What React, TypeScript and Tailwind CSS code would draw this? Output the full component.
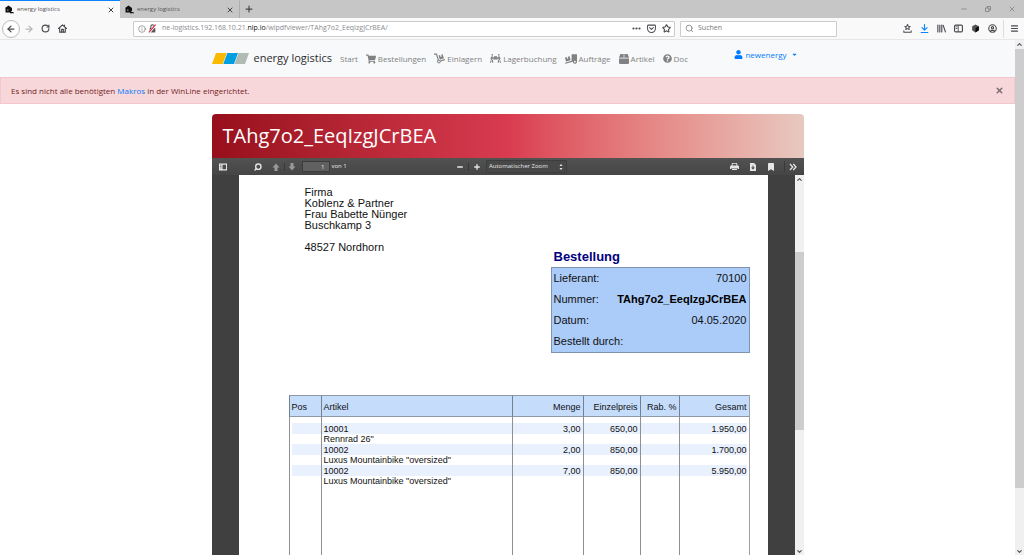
import { useState } from 'react'
import type { ReactNode } from 'react'
import {
  FaBookmark,
  FaBox,
  FaCaretDown,
  FaDolly,
  FaPeopleCarry,
  FaQuestionCircle,
  FaShoppingCart,
  FaTruckLoading,
  FaUser,
} from 'react-icons/fa'
import {
  ArrowLeft,
  ArrowRight,
  ChevronDown,
  ChevronUp,
  CircleUser,
  Info,
  Menu,
  Minus,
  Plus,
  RotateCw,
  Search,
  Star,
  X,
} from 'lucide-react'

const navItems = [
  { name: 'Start', icon: null },
  { name: 'Bestellungen', icon: <FaShoppingCart size={10} /> },
  { name: 'Einlagern', icon: <FaDolly size={11} /> },
  { name: 'Lagerbuchung', icon: <FaPeopleCarry size={11} /> },
  { name: 'Aufträge', icon: <FaTruckLoading size={12} /> },
  { name: 'Artikel', icon: <FaBox size={10} /> },
  { name: 'Doc', icon: <FaQuestionCircle size={9} /> },
]

const address = ['Firma', 'Koblenz & Partner', 'Frau Babette Nünger', 'Buschkamp 3', '', '48527 Nordhorn']

const orderInfo = [
  { label: 'Lieferant:', value: '70100', bold: false },
  { label: 'Nummer:', value: 'TAhg7o2_EeqIzgJCrBEA', bold: true },
  { label: 'Datum:', value: '04.05.2020', bold: false },
  { label: 'Bestellt durch:', value: '', bold: false },
]

const positions = [
  { id: '10001', name: 'Rennrad 26"', amount: '3,00', price: '650,00', total: '1.950,00' },
  { id: '10002', name: 'Luxus Mountainbike "oversized"', amount: '2,00', price: '850,00', total: '1.700,00' },
  { id: '10002', name: 'Luxus Mountainbike "oversized"', amount: '7,00', price: '850,00', total: '5.950,00' },
]

function WarehouseIcon() {
  return (
    <svg className="w-[9px] h-[9px] shrink-0" viewBox="0 0 18 18" aria-hidden="true">
      <path d="M0 6 7 1l7 5v6h-2v3H1V7z" fill="#111" />
      <path d="M4 9h3v3H4z" fill="#777" />
      <path d="M11 9v6h5" fill="none" stroke="#111" strokeWidth="2" />
      <circle cx="12" cy="15" r="2" fill="#111" />
      <circle cx="16" cy="15.500" r="1.500" fill="#111" />
    </svg>
  )
}

function HomeIcon() {
  return (
    <svg className="w-[9px] h-[9px]" viewBox="0 0 16 16" fill="none" stroke="currentColor" strokeWidth="2" strokeLinejoin="round" strokeLinecap="round">
      <path d="M1 8 8 1.500 15 8M3 8v6.500h10V8M11.500 4V2" />
      <path d="M6.500 14V9.500h3V14" />
    </svg>
  )
}

function PocketIcon() {
  return (
    <svg className="w-[9px] h-[9px]" viewBox="0 0 16 16" fill="none" stroke="currentColor" strokeWidth="1.800" strokeLinejoin="round" strokeLinecap="round">
      <path d="M2.500 2h11A1.500 1.500 0 0 1 15 3.500V8A7 7 0 0 1 1 8V3.500A1.500 1.500 0 0 1 2.500 2z" />
      <path d="m4.800 6.500 3.200 3 3.200-3" />
    </svg>
  )
}

function InsecureIcon() {
  return (
    <svg className="w-[9px] h-[9px]" viewBox="0 0 16 16">
      <path d="M3 7h10v8H3z" fill="#555" />
      <path d="M5 7V4.500a3 3 0 0 1 6 0V7" fill="none" stroke="#555" strokeWidth="2" />
      <path d="M2 15.500 14 1" stroke="#fff" strokeWidth="4" />
      <path d="M1.500 15 13.500 1" stroke="#e2223e" strokeWidth="2" />
    </svg>
  )
}

function BookmarkTrayIcon() {
  return (
    <svg className="w-[9px] h-[9px]" viewBox="0 0 16 16" fill="none" stroke="currentColor" strokeWidth="1.800" strokeLinejoin="round" strokeLinecap="round">
      <path d="m8 1 1.500 3 3.300.4-2.400 2.200.6 3.200L8 8.300 5 9.800l.6-3.200L3.200 4.400 6.500 4z" />
      <path d="M1.500 12v2.500h13V12" />
    </svg>
  )
}

function DownloadIcon() {
  return (
    <svg className="w-[9px] h-[9px] text-[#0a84ff]" viewBox="0 0 16 16" fill="none" stroke="currentColor" strokeWidth="2" strokeLinejoin="round" strokeLinecap="round">
      <path d="M8 1v9.500M3.500 6.500 8 11l4.500-4.500M2 15h12" />
    </svg>
  )
}

function LibraryIcon() {
  return (
    <svg className="w-[9px] h-[9px]" viewBox="0 0 16 16" fill="none" stroke="currentColor" strokeWidth="2" strokeLinecap="round">
      <path d="M1.500 2v12M5 2v12M8.500 2v12M11 2.500l4 11.500" />
    </svg>
  )
}

function SidebarIcon() {
  return (
    <svg className="w-[9px] h-[9px]" viewBox="0 0 16 16" fill="none" stroke="currentColor" strokeWidth="2">
      <rect x="1" y="2" width="14" height="12" rx="2" />
      <path d="M7.500 2v12M3 5h3M3 8h3" strokeWidth="1.500" />
    </svg>
  )
}

function CubeIcon() {
  return (
    <svg className="w-[9px] h-[9px]" viewBox="0 0 16 16">
      <path d="m8 1 6 3v7l-6 4-6-4V4z" fill="#555" />
      <path d="m8 7 6-3v7l-6 4z" fill="#0c0c0d" />
    </svg>
  )
}

function PanelIcon() {
  return (
    <svg className="w-[8px] h-[8px]" viewBox="0 0 16 16">
      <path fillRule="evenodd" d="M0 1h16v14H0zm7 2.500v9h7v-9z" fill="currentColor" />
      <path d="M2 4h3M2 7h3M2 10h3" stroke="#474747" strokeWidth="1.200" />
    </svg>
  )
}

function PageArrow({ down }: { down?: boolean }) {
  return (
    <svg className="w-[8px] h-[8px] text-[#999]" viewBox="0 0 16 16">
      <path d={down ? 'M5 0h6v7h4l-7 8-7-8h4z' : 'M5 16h6V9h4L8 1 1 9h4z'} fill="currentColor" />
    </svg>
  )
}

function PrinterIcon() {
  return (
    <svg className="w-[9px] h-[9px]" viewBox="0 0 18 16">
      <path d="M4 1h10l1 5h1.500L18 8v5h-3v-2H3v2H0V8l1.500-2H3zm1.500 1.500L5 6h8l-.5-3.500z" fill="currentColor" />
      <path d="M4 12h10v3H4z" fill="currentColor" />
    </svg>
  )
}

function FileDownIcon() {
  return (
    <svg className="w-[8px] h-[8px]" viewBox="0 0 16 16">
      <path d="M2 0h8l4 4v12H2z" fill="currentColor" />
      <path d="M7 5h2v4h3l-4 4-4-4h3z" fill="#474747" />
    </svg>
  )
}

function Logo() {
  return (
    <svg className="w-[37px] h-[11px]" viewBox="0 0 37 11" aria-hidden="true">
      <path d="M4 0h10.700l-4 11H0z" fill="#fbba00" />
      <path d="M15.300 0H26l-4 11H11.300z" fill="#009fe3" />
      <path d="M26.500 0H37l-4 11H22.500z" fill="#b2bbb3" />
    </svg>
  )
}

function IconButton({ label, className = '', children }: { label: string; className?: string; children: ReactNode }) {
  return (
    <button type="button" aria-label={label} className={`flex items-center justify-center shrink-0 ${className}`}>
      {children}
    </button>
  )
}

function BrowserTab({ active }: { active?: boolean }) {
  return (
    <div
      className={`w-[120px] flex items-center px-[5px] border-t ${
        active ? 'bg-[#f9f9fa] border-t-[#0a84ff]' : 'border-t-transparent border-r border-r-[#adadad]'
      }`}
    >
      <WarehouseIcon />
      <span className="flex-1 pl-[3px] text-[6px] text-[#555]">energy logistics</span>
      <IconButton label="Tab schließen">
        <X size={8} color="#444" strokeWidth={3} />
      </IconButton>
    </div>
  )
}

function BrowserChrome() {
  return (
    <header className="shrink-0 text-[#4a4a4f]">
      <div className="flex h-[18px] bg-[#c6c6c6]">
        <BrowserTab active />
        <BrowserTab />
        <IconButton label="Neuer Tab" className="w-[18px]">
          <Plus size={10} strokeWidth={3} />
        </IconButton>
        <div className="ml-auto flex text-[#777]">
          <IconButton label="Minimieren" className="w-6">
            <Minus size={8} />
          </IconButton>
          <IconButton label="Wiederherstellen" className="w-6">
            <svg className="w-[6px] h-[6px]" viewBox="0 0 12 12" fill="none" stroke="currentColor" strokeWidth="1.500">
              <path d="M1 4h7v7H1zM4 4V1h7v7H8" />
            </svg>
          </IconButton>
          <IconButton label="Schließen" className="w-6">
            <X size={8} />
          </IconButton>
        </div>
      </div>
      <div className="flex items-center h-[22px] pl-0.5 bg-[#f9f9fa] border-b border-[#e6e6e8]">
        <IconButton label="Zurück" className="w-[18px] h-[18px] rounded-full border border-[#bbb] bg-white">
          <ArrowLeft size={10} strokeWidth={3} />
        </IconButton>
        <IconButton label="Vor" className="w-[17px] text-[#b5b5b8]">
          <ArrowRight size={10} strokeWidth={3} />
        </IconButton>
        <IconButton label="Neu laden" className="w-[17px]">
          <RotateCw size={9} strokeWidth={3} />
        </IconButton>
        <IconButton label="Startseite" className="w-[17px]">
          <HomeIcon />
        </IconButton>
        <div className="flex-1 flex items-center gap-0.5 h-4 ml-[62px] pl-1 pr-px bg-white border border-[#ccc] rounded-[1px]">
          <Info size={8} color="#777" />
          <InsecureIcon />
          <a href="#url" className="flex-1 pl-[3px] text-[7px] text-[#8b8b8f]">
            ne-logistics.192.168.10.21.<span className="text-[#0c0c0d]">nip.io</span>/wlpdfviewer/TAhg7o2_EeqIzgJCrBEA/
          </a>
          <IconButton label="Seitenaktionen" className="w-[13px]">
            <svg className="w-[9px] h-[3px]" viewBox="0 0 9 3" fill="currentColor">
              <circle cx="1.500" cy="1.500" r="1.100" />
              <circle cx="4.500" cy="1.500" r="1.100" />
              <circle cx="7.500" cy="1.500" r="1.100" />
            </svg>
          </IconButton>
          <IconButton label="Pocket" className="w-[13px]">
            <PocketIcon />
          </IconButton>
          <IconButton label="Lesezeichen" className="w-[13px]">
            <Star size={9} strokeWidth={3} />
          </IconButton>
        </div>
        <label className="w-[157px] flex items-center gap-1 h-4 ml-[5px] px-1 bg-white border border-[#ccc] rounded-[1px]">
          <Search size={9} color="#777" className="shrink-0" />
          <input type="text" aria-label="Suchen" placeholder="Suchen" className="w-full text-[7px] outline-none placeholder:text-[#77777b]" />
        </label>
        <div className="flex ml-[62px]">
          <IconButton label="Lesezeichen-Menü" className="w-[17px]"><BookmarkTrayIcon /></IconButton>
          <IconButton label="Downloads" className="w-[17px]"><DownloadIcon /></IconButton>
          <IconButton label="Bibliothek" className="w-[17px]"><LibraryIcon /></IconButton>
          <IconButton label="Sidebar" className="w-[17px]"><SidebarIcon /></IconButton>
          <IconButton label="Erweiterung" className="w-[17px]"><CubeIcon /></IconButton>
          <IconButton label="Konto" className="w-[17px]"><CircleUser size={9} strokeWidth={3} /></IconButton>
        </div>
        <IconButton label="Menü" className="w-[21px] h-[18px] ml-0.5 border-l border-[#ddd]">
          <Menu size={9} strokeWidth={3} />
        </IconButton>
      </div>
    </header>
  )
}

function Navbar() {
  return (
    <nav className="bg-[#f8f9fa]">
      <div className="max-w-[592px] h-[37px] mx-auto flex items-center">
        <a href="#home" className="flex items-center gap-[5px] mr-2 text-[11px] text-[#2b2d2f]">
          <Logo />
          energy logistics
        </a>
        <div className="flex gap-2 text-[8px] text-[#808182]">
          {navItems.map((item) => (
            <a key={item.name} href={`#${item.name}`} className="flex items-center gap-0.5">
              {item.icon}
              {item.name}
            </a>
          ))}
        </div>
        <button type="button" className="flex items-center gap-0.5 ml-auto mr-1.5 mb-2 text-[8px] text-[#007bff]">
          <FaUser size={9} />
          newenergy
          <FaCaretDown size={7} className="ml-0.5" />
        </button>
      </div>
    </nav>
  )
}

function Scrollbar({ before, thumb, after }: { before: string; thumb: string; after: string }) {
  return (
    <div className="w-[9px] shrink-0 flex flex-col items-center bg-[#f0f0f0] text-[#555]">
      <ChevronUp size={7} strokeWidth={4} className="my-px shrink-0" />
      <div className={before} />
      <div className={`w-full bg-[#cdcdcd] ${thumb}`} />
      <div className={after} />
      <ChevronDown size={7} strokeWidth={4} className="shrink-0" />
    </div>
  )
}

function PdfToolbar() {
  return (
    <div className="h-[17px] shrink-0 flex items-center pl-1.5 pr-0.5 bg-linear-to-b from-[#525252] to-[#454545] text-[#e6e6e6] text-[6px]">
      <div className="flex-1 flex items-center">
        <IconButton label="Sidebar umschalten" className="w-[10px]"><PanelIcon /></IconButton>
        <IconButton label="Suchen" className="w-[12px] ml-6">
          <Search size={8} strokeWidth={4} className="-scale-x-100" />
        </IconButton>
        <IconButton label="Vorherige Seite" className="w-[16px] ml-1"><PageArrow /></IconButton>
        <IconButton label="Nächste Seite" className="w-[16px] border-l border-[#3a3a3a]"><PageArrow down /></IconButton>
        <input
          type="text"
          aria-label="Seite"
          defaultValue="1"
          className="w-7 h-[11px] ml-0.5 pr-1 text-right bg-[#606060] border border-[#3c3c3c] outline-none"
        />
        <span className="ml-0.5">von 1</span>
      </div>
      <div className="flex items-center">
        <IconButton label="Verkleinern" className="w-4"><Minus size={8} strokeWidth={4} /></IconButton>
        <IconButton label="Vergrößern" className="w-4 border-l border-[#3a3a3a]"><Plus size={8} strokeWidth={4} /></IconButton>
        <div className="relative flex items-center">
          <select
            aria-label="Zoom"
            className="appearance-none w-[81px] h-[13px] ml-0.5 pl-0.5 bg-[#484848] border border-[#3d3d3d] rounded-[1px] outline-none"
          >
            <option>Automatischer Zoom</option>
          </select>
          <svg className="absolute right-1 w-[4px] h-[6px] pointer-events-none" viewBox="0 0 8 12" fill="currentColor">
            <path d="m4 0 3 4H1zM4 12l3-4H1z" />
          </svg>
        </div>
      </div>
      <div className="flex-1 flex items-center justify-end">
        <IconButton label="Drucken" className="w-[18px]"><PrinterIcon /></IconButton>
        <IconButton label="Herunterladen" className="w-[18px]"><FileDownIcon /></IconButton>
        <IconButton label="Aktuelle Ansicht" className="w-[18px]"><FaBookmark size={8} /></IconButton>
        <IconButton label="Werkzeuge" className="w-[18px] h-[11px] ml-1 border-l border-[#3a3a3a]">
          <svg className="w-[8px] h-[8px]" viewBox="0 0 16 16" fill="none" stroke="currentColor" strokeWidth="2.500">
            <path d="m2 2 5.500 6L2 14M8.500 2 14 8l-5.500 6" />
          </svg>
        </IconButton>
      </div>
    </div>
  )
}

function PositionTable() {
  return (
    <table className="w-full table-fixed border-separate border-spacing-0 border-r border-[#a0a0a0] text-[9px] leading-[10px]">
      <colgroup>
        <col className="w-[32px]" />
        <col />
        <col className="w-[71px]" />
        <col className="w-[57px]" />
        <col className="w-[39px]" />
        <col className="w-[70px]" />
      </colgroup>
      <thead>
        <tr className="h-[22px] bg-[#c5dcfb] text-left *:font-normal *:px-[2px] *:pt-[2px] *:border-l *:border-y *:border-l-[#75808f] *:border-y-[#8d99aa]">
          <th>Pos</th>
          <th>Artikel</th>
          <th className="text-right">Menge</th>
          <th className="text-right">Einzelpreis</th>
          <th className="text-right">Rab. %</th>
          <th className="text-right">Gesamt</th>
        </tr>
      </thead>
      <tbody className="[&_td]:border-l [&_td]:border-[#909090] [&_td]:px-[2px] [&_td]:py-0">
        <tr className="h-[6px]">
          <td /><td /><td /><td /><td /><td />
        </tr>
        {positions.map((pos, i) => [
          <tr key={`pos-${i}`} className="h-[11px] text-right *:bg-[#e9f0fe]">
            <td className="bg-clip-content pr-0!" />
            <td className="text-left">{pos.id}</td>
            <td>{pos.amount}</td>
            <td>{pos.price}</td>
            <td />
            <td className="pl-0! bg-clip-content">{pos.total}</td>
          </tr>,
          <tr key={`name-${i}`} className="h-[10px]">
            <td />
            <td className="whitespace-nowrap">{pos.name}</td>
            <td /><td /><td /><td />
          </tr>,
        ])}
        <tr className="h-[240px]">
          <td /><td /><td /><td /><td /><td />
        </tr>
      </tbody>
    </table>
  )
}

function PdfPage() {
  return (
    <div className="flex-1 mx-[27px] pl-[50px] pr-[18px] pt-3 overflow-hidden bg-white text-[#111] font-['Liberation_Sans',Arial,sans-serif]">
      <address className="pl-4 not-italic text-[11px] leading-[11px]">
        {address.map((line, i) => (
          <div key={i} className="h-[11px]">{line}</div>
        ))}
      </address>
      <section className="w-[199px] ml-auto text-[11px]">
        <h2 className="pl-[3px] text-[13px] leading-2 font-bold text-[#000080]">Bestellung</h2>
        <dl className="mt-1.5 px-[2px] bg-[#abcbf8] border border-[#7f93b2]">
          {orderInfo.map((info) => (
            <div key={info.label} className="flex items-center justify-between h-[21px]">
              <dt>{info.label}</dt>
              <dd className={info.bold ? 'font-bold text-black' : ''}>{info.value}</dd>
            </div>
          ))}
        </dl>
      </section>
      <div className="mt-[42px]">
        <PositionTable />
      </div>
    </div>
  )
}

function App() {
  const [showAlert, setShowAlert] = useState(true)

  return (
    <div className="h-screen flex flex-col overflow-hidden bg-white font-['Open_Sans','Noto_Sans',sans-serif]">
      <BrowserChrome />
      <div className="flex-1 min-h-0 flex">
        <div className="flex-1 min-w-0 flex flex-col">
          <Navbar />
          {showAlert && (
            <div role="alert" className="h-[27px] shrink-0 flex items-center justify-between px-2.5 bg-[#f8d7da] border border-[#f5c6cb] text-[8px] text-[#721c24]">
              <p>
                Es sind nicht alle benötigten <a href="#makros" className="text-[#007bff]">Makros</a> in der WinLine eingerichtet.
              </p>
              <button type="button" aria-label="Meldung schließen" onClick={() => setShowAlert(false)}>
                <X size={9} strokeWidth={4} color="#7c6b6d" />
              </button>
            </div>
          )}
          <main className="flex-1 min-h-0 w-full max-w-[592px] mx-auto pt-[10px] flex flex-col">
            <div className="h-[44px] shrink-0 flex items-center px-[11px] rounded-t-sm bg-linear-to-r from-[#970f1b] via-[#d93b50] to-[#e7c9c0]">
              <h1 className="text-[20px] text-white">TAhg7o2_EeqIzgJCrBEA</h1>
            </div>
            <PdfToolbar />
            <div className="flex-1 min-h-0 flex bg-[#404040]">
              <PdfPage />
              <Scrollbar before="h-[68px]" thumb="h-[178px]" after="flex-1" />
            </div>
          </main>
        </div>
        <Scrollbar before="h-0" thumb="flex-1" after="h-[60px]" />
      </div>
    </div>
  )
}

export default App
